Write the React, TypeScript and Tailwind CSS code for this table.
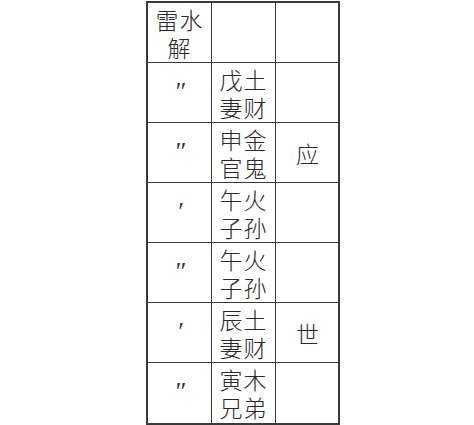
const rows: { mark: string; mid: string[]; side: string }[] = [
  { mark: "″", mid: ["戊土", "妻财"], side: "" },
  { mark: "″", mid: ["申金", "官鬼"], side: "应" },
  { mark: "′", mid: ["午火", "子孙"], side: "" },
  { mark: "″", mid: ["午火", "子孙"], side: "" },
  { mark: "′", mid: ["辰土", "妻财"], side: "世" },
  { mark: "″", mid: ["寅木", "兄弟"], side: "" },
];

const cjk = "font-['Noto_Sans_CJK_SC',sans-serif] font-light text-[23px] leading-[28px] tracking-[1px] text-[#2a2a2a]";

export default function App() {
  return (
    <div className="h-[425px] w-[474px] bg-white pt-px pl-[146px]">
      <div className="grid w-[194px] grid-cols-[64px_64px_64px] border-2 border-[#3a3a3a]">
        {/* header row */}
        <div className={`flex h-[60px] flex-col items-center justify-center border-r border-b border-[#3a3a3a] ${cjk}`}>
          <span>雷水</span>
          <span>解</span>
        </div>
        <div className="h-[60px] border-r border-b border-[#3a3a3a]" />
        <div className="h-[60px] border-b border-[#3a3a3a]" />

        {rows.map((r, i) => {
          const last = i === rows.length - 1;
          const bb = last ? "" : "border-b";
          return (
            <div key={i} className="contents">
              <div
                className={`flex h-[60px] items-start justify-center border-r border-[#3a3a3a] pt-[15px] font-['Liberation_Serif',serif] text-[26px] italic leading-[28px] text-[#333] ${bb}`}
              >
                {r.mark}
              </div>
              <div
                className={`flex h-[60px] flex-col items-center justify-center border-r border-[#3a3a3a] ${cjk} ${bb}`}
              >
                <span>{r.mid[0]}</span>
                <span>{r.mid[1]}</span>
              </div>
              <div
                className={`flex h-[60px] items-center justify-center border-[#3a3a3a] ${cjk} ${bb}`}
              >
                {r.side}
              </div>
            </div>
          );
        })}
      </div>
    </div>
  );
}
